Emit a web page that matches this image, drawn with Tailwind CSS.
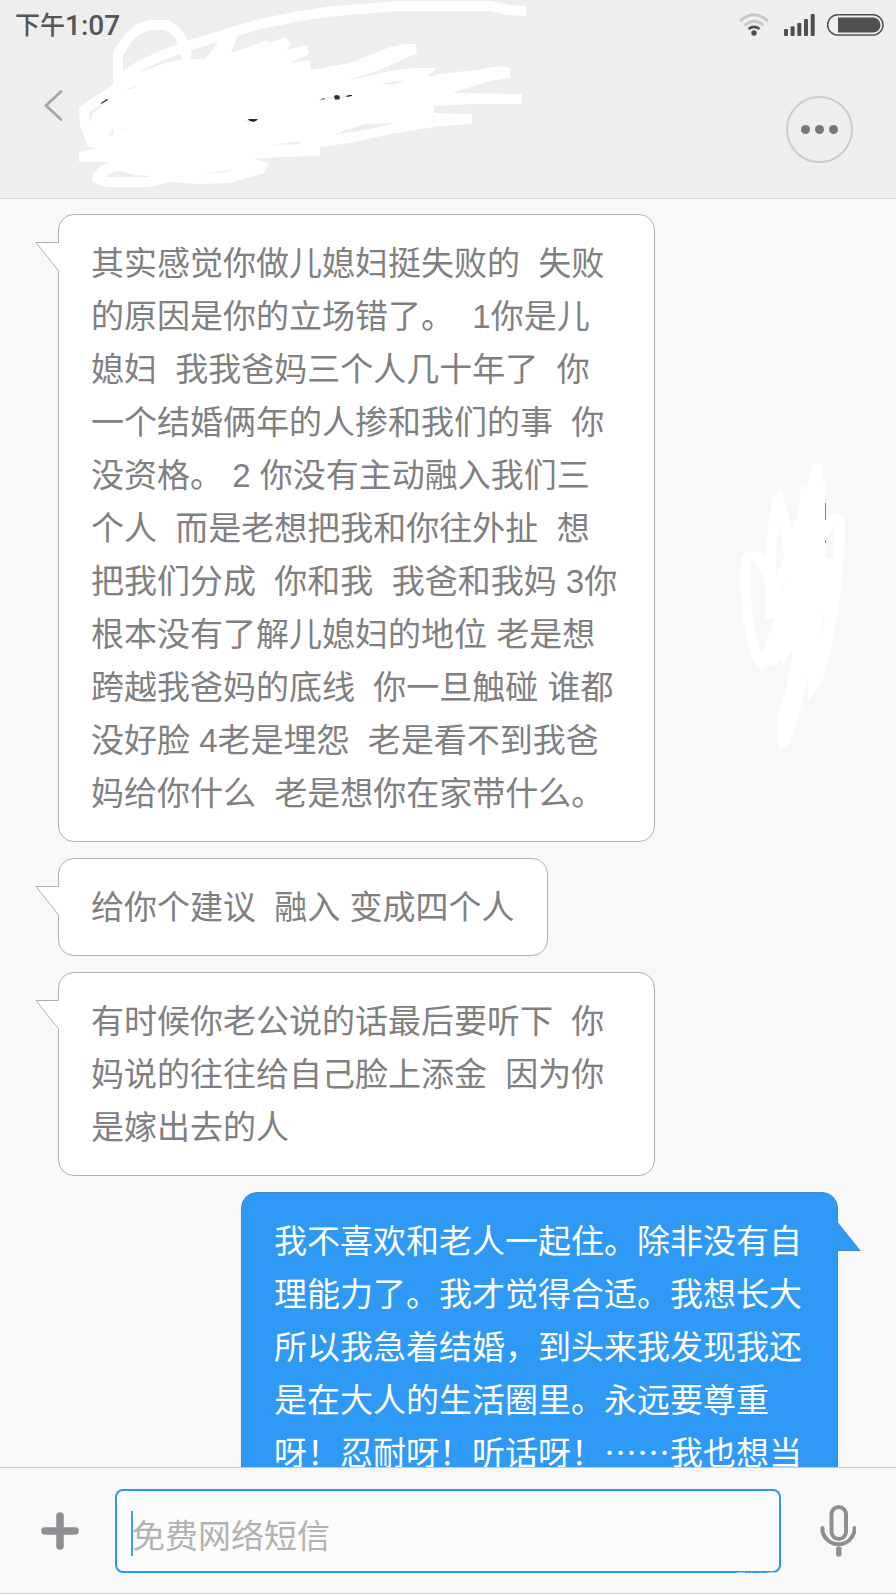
<!DOCTYPE html>
<html lang="zh-CN">
  <head>
    <meta charset="utf-8" />
    <meta name="viewport" content="width=device-width, initial-scale=1" />
    <title>短信</title>
    <script src="https://cdn.jsdelivr.net/npm/@tailwindcss/browser@4"></script>
  </head>
  <body class="flex h-screen flex-col bg-[#f8f8f8] font-['Liberation_Sans','Noto_Sans_CJK_SC',sans-serif]">
    <header class="relative h-[199px] shrink-0 border-b border-[#d8d8d8] bg-[#eee]">
      <!-- status bar -->
      <div class="flex h-[50px] items-center justify-between pr-3 pl-[15px] text-[#555]">
        <div class="flex items-center pt-0.5 font-['Roboto','Noto_Sans_CJK_SC',sans-serif] font-medium">
          <span class="text-[25px] leading-7">下午</span>
          <span class="text-[28px] leading-7">1:07</span>
        </div>
        <div class="flex items-center">
          <svg class="h-[26px] w-[146px]" viewBox="738 12 146 26" fill="none" aria-hidden="true">
            <circle cx="754" cy="33" r="2.7" fill="#505050" />
            <path d="M748.500 29q5.500-4.300 11 0" stroke="#505050" stroke-width="2.800" />
            <path d="M744.500 25.500q9.500-8.500 19 0" stroke="#c8c8c8" stroke-width="2.800" />
            <path d="M740 21q14-12.500 28 0" stroke="#c8c8c8" stroke-width="2.800" />
            <g fill="#505050">
              <rect x="784" y="29" width="4" height="7" rx="1" />
              <rect x="790.600" y="26.300" width="4" height="9.700" rx="1" />
              <rect x="797.300" y="23" width="4" height="13" rx="1" />
              <rect x="804" y="19" width="4" height="17" rx="1" />
              <rect x="810.700" y="14" width="4" height="22" rx="1" />
              <path d="M838 17.500h35a7.400 7.400 0 0 1 0 15h-35z" />
            </g>
            <rect x="827.700" y="14.700" width="55.300" height="20.300" rx="10.100" stroke="#505050" stroke-width="1.500" />
          </svg>
        </div>
      </div>
      <div class="flex items-start justify-between pt-10 pr-[43px] pl-10">
        <button type="button" aria-label="返回">
          <svg class="h-8 w-6" viewBox="0 0 24 32" fill="none" stroke="#a6a6a6" stroke-width="2.800" stroke-linecap="round">
            <path d="M21 1.500 6 15.500 21 29.500" />
          </svg>
        </button>
        <button type="button" aria-label="更多" class="mt-1.5 flex size-[67px] items-center justify-center gap-[5px] rounded-full border-2 border-[#cdcdcd]">
          <span class="size-[9px] rounded-full bg-[#777]"></span>
          <span class="size-[9px] rounded-full bg-[#777]"></span>
          <span class="size-[9px] rounded-full bg-[#777]"></span>
        </button>
      </div>
      <!-- brush over the contact name -->
      <svg class="pointer-events-none absolute top-0 left-[78px] h-[190px] w-[450px]" viewBox="78 0 450 190" fill="none" aria-hidden="true">
        <path d="M118 85V54L128 38 138 29 149 25H167L178 33 186 48V62" stroke="#fff" stroke-width="10" />
        <path d="M118 81 136 68 160 56 190 45 260 24 300 16 330 11.500 397 6H490L509 10 526 11" stroke="#fff" stroke-width="10" />
        <path fill="#fff" d="M79 107 115 83 125 75 141 72 165 63 184 59H205L219 41 238 35 231 53 267 40 270 43 285 37 291 44 286 50 307 45 309 54 290 63 310 60 311 70 350 63 390 47 405 44H416L417 53 380 70 346 81 385 72 410 68H437L427 77 440 74 475 70 500 66 510 68V78L490 81 452 93 522 94V104H474L434 106V113L472 114V124L440 126 390 134 350 143 320 147V156L283 157 253 159 269 163 264 173 230 183 200 184 170 182 150 187H105L93 182 92 176 98 168 108 162H79V152L97 148 88 147 80 125Z" />
        <g fill="#eee">
          <path d="M106 176.500 114 171.500 121 171 136 175 149 176V177H106Z" />
          <path d="M91 124 89 113 108 99 103 105 92 114Z" />
          <path d="M272 144.500 298 141.500 300 142V144.500Z" />
          <path d="M202 174 214 172 233 170 228 172Z" />
          <path d="M334 135 343 131 365 124 397 123 365 130Z" />
          <path d="M380 84 392 82 404 80 395 84.500Z" />
          <path d="M316 100 333 96 348 95 345 98Z" />
          <path d="M109 137 111 131 114 128 113 134Z" />
          <path d="M124 90 137 85 134 88Z" />
          <path d="M124 129 127 127 126 130Z" />
          <path d="M242 121 250 120 252 122Z" />
        </g>
        <g fill="#2c2c2c">
          <path d="M100 103.500 107 99 108 100 102 103.500Z" />
          <path d="M248 119H258L256 121 253 122 249 120.500Z" />
          <path d="M334 96 336 95 339 95.500 340 98 339 99.500H335Z" />
          <path d="M346 96 349 95H352V96L347 97Z" />
          <path d="M320 99.500 325 98 324 99.500Z" />
        </g>
      </svg>
    </header>

    <main class="relative flex min-h-0 flex-1 flex-col items-start gap-4 overflow-hidden px-[58px] pt-[15px] text-[33px] leading-[53px] text-[#808080]">
      <!-- brush over the avatar -->
      <svg class="pointer-events-none absolute top-[265px] right-[51px] h-[287px] w-[105px]" viewBox="740 464 105 287" aria-hidden="true">
        <path fill="#fff" fill-rule="evenodd" d="M813 464 822 465 823 482H825V520L834 512 845 517V540L840 600 832 645 823 678 808 702V674L803 700 790 744 778 751 777 721 788 680 794 640 792 650 783 666 781 657 777 667 768 665 759 669 752 658 743 620 740 580 741 555 752 551 761 552 765 560 768 528 773 497 781 491 787 508 792 530 799 510 801 487H807ZM750 561H754L765 580V619H775L761 655 755 630 751 600ZM780 524 784 555 776 578V545ZM787 578 783 586 781 596ZM825 540 835 524 834 558H825ZM823 612 825 616 821 640Z" />
        <path fill="#e2643c" d="M825 503h1v17h-1zM825 540h1v3h-1z" />
      </svg>

      <article class="relative w-[597px] max-w-full shrink-0 rounded-2xl border border-[#b0b0b0] bg-white px-8 pt-[22px] pb-[21px]">
        <svg class="absolute top-[27px] -left-6 h-[31px] w-[25px]" viewBox="0 0 25 31" aria-hidden="true">
          <path fill="#fff" d="M25 1H1L24 30h1z" />
          <path fill="none" stroke="#b0b0b0" d="M24 .5H1L24 29.500" />
        </svg>
        <p class="whitespace-pre">其实感觉你做儿媳妇挺失败的  失败
的原因是你的立场错了。  1你是儿
媳妇  我我爸妈三个人几十年了  你
一个结婚俩年的人掺和我们的事  你
没资格。 2 你没有主动融入我们三
个人  而是老想把我和你往外扯  想
把我们分成  你和我  我爸和我妈 3你
根本没有了解儿媳妇的地位 老是想
跨越我爸妈的底线  你一旦触碰 谁都
没好脸 4老是埋怨  老是看不到我爸
妈给你什么  老是想你在家带什么。</p>
      </article>

      <article class="relative max-w-full shrink-0 rounded-2xl border border-[#b0b0b0] bg-white px-8 pt-[22px] pb-[21px]">
        <svg class="absolute top-[27px] -left-6 h-[31px] w-[25px]" viewBox="0 0 25 31" aria-hidden="true">
          <path fill="#fff" d="M25 1H1L24 30h1z" />
          <path fill="none" stroke="#b0b0b0" d="M24 .5H1L24 29.500" />
        </svg>
        <p class="whitespace-pre">给你个建议  融入 变成四个人</p>
      </article>

      <article class="relative w-[597px] max-w-full shrink-0 rounded-2xl border border-[#b0b0b0] bg-white px-8 pt-[22px] pb-[21px]">
        <svg class="absolute top-[27px] -left-6 h-[31px] w-[25px]" viewBox="0 0 25 31" aria-hidden="true">
          <path fill="#fff" d="M25 1H1L24 30h1z" />
          <path fill="none" stroke="#b0b0b0" d="M24 .5H1L24 29.500" />
        </svg>
        <p class="whitespace-pre">有时候你老公说的话最后要听下  你
妈说的往往给自己脸上添金  因为你
是嫁出去的人</p>
      </article>

      <article class="relative w-[597px] max-w-full shrink-0 self-end rounded-2xl border border-[#4189cc] bg-[#2f99f6] px-8 pt-[22px] pb-[21px] text-white">
        <svg class="absolute top-[28px] -right-6 h-[31px] w-[25px]" viewBox="0 0 25 31" aria-hidden="true">
          <path fill="#2f99f6" d="M0 0 24 29.500H0z" />
          <path fill="none" stroke="#4189cc" d="M1 1 24 29.500H1" />
        </svg>
        <p class="whitespace-pre">我不喜欢和老人一起住。除非没有自
理能力了。我才觉得合适。我想长大
所以我急着结婚，到头来我发现我还
是在大人的生活圈里。永远要尊重
呀！忍耐呀！听话呀！<span class="font-['Noto_Sans_CJK_SC',sans-serif] leading-none">……</span>我也想当</p>
      </article>
    </main>

    <footer class="relative flex h-[127px] shrink-0 items-center gap-[35px] border-y border-[#c8c8c8] bg-[#f8f8f8] px-10">
      <button type="button" aria-label="添加" class="shrink-0">
        <svg class="size-10" viewBox="0 0 40 40" stroke="#8e8f93" stroke-width="7.500" stroke-linecap="round">
          <path d="M20 5v30M5 20h30" />
        </svg>
      </button>
      <div class="relative min-w-0 flex-1">
        <input
          type="text"
          aria-label="短信内容"
          placeholder="免费网络短信"
          class="block h-[84px] w-full rounded-lg border-2 border-[#2a97f7] bg-[#fcfcfc] px-[15px] pt-3 text-[33px] text-[#808080] outline-none placeholder:text-[#b2b2b2]"
        />
        <span class="absolute top-[22px] left-4 h-[45px] w-0.5 bg-[#3a9ff8]"></span>
      </div>
      <button type="button" aria-label="语音" class="shrink-0">
        <svg class="h-[54px] w-10" viewBox="0 0 40 54" fill="none" stroke="#8e8f93" stroke-width="4" stroke-linecap="round">
          <rect x="15.500" y="3" width="14.500" height="32" rx="7.250" />
          <path d="M6.500 24v3a16.300 16.300 0 0 0 32 0v-3" />
          <path d="M22.800 45v5" stroke-width="5.500" />
        </svg>
      </button>
      <small class="absolute right-2.5 bottom-[7px] text-[10px] leading-4 text-white/70">图片来源网络，如有侵权立马删除</small>
    </footer>
  </body>
</html>
